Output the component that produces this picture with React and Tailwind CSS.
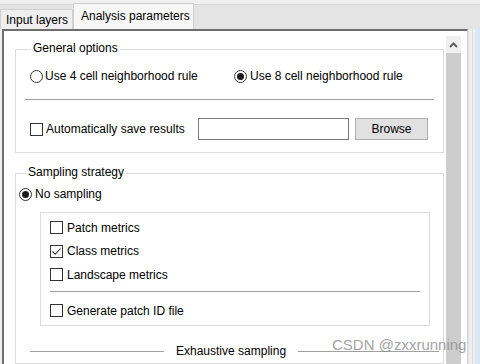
const font = { fontFamily: '"Liberation Sans", Arial, sans-serif' };

function Radio({ checked }) {
  return (
    <span className="w-[13px] h-[13px] rounded-full border border-[#333] bg-white flex items-center justify-center shrink-0">
      {checked && <span className="w-[7px] h-[7px] rounded-full bg-[#1a1a1a]" />}
    </span>
  );
}

function Check({ checked }) {
  return (
    <span className="w-[13px] h-[13px] border border-[#333] bg-white flex items-center justify-center shrink-0">
      {checked && (
        <svg width="11" height="11" viewBox="0 0 11 11">
          <path d="M1.5 5.5 L4.2 8.2 L9.5 2.5" fill="none" stroke="#333" strokeWidth="1.1" />
        </svg>
      )}
    </span>
  );
}

function CheckRow({ label, checked, h = 'h-[23px]' }) {
  return (
    <div className={`flex items-center gap-[4px] ${h}`}>
      <Check checked={checked} />
      <span>{label}</span>
    </div>
  );
}

export default function App() {
  return (
    <div
      className="w-[480px] h-[364px] bg-[#f0f0f0] relative overflow-hidden flex flex-col text-[12px] text-black leading-none"
      style={font}
    >
      {/* tab strip */}
      <div className="h-[5px] border-b border-[#d6d6d6] bg-[#f0f0f0] shrink-0" />
      <div className="h-[24px] bg-[#e4e4e4] flex items-end shrink-0 relative">
        <div className="h-[20px] w-[73px] border border-b-0 border-[#d0d0d0] bg-[#efefef] flex items-center pl-[5px]">
          Input layers
        </div>
        <div className="absolute left-[73px] top-[-2px] h-[26px] w-[121px] border border-b-0 border-[#cfcfcf] bg-[#f7f7f7] flex items-center pl-[7px] pb-[2px]">
          Analysis parameters
        </div>
      </div>

      <div className="flex flex-1 min-h-0">
        {/* pane */}
        <div className="ml-[2px] w-[466px] border-l-2 border-t-2 border-[#6e6e6e] border-r border-r-[#d9d9d9] bg-white flex pt-[5px] pr-[6px]">
          <div className="flex-1 flex flex-col pl-[11px] pr-[2px]">
            <fieldset className="border border-[#dcdcdc] mt-[6px] h-[111px] px-[9px]">
              <legend className="ml-[6px] px-[2px] h-[14px]">General options</legend>
              <div className="flex items-center h-[26px] mt-[7px] pl-[5px]">
                <div className="flex items-center gap-[2px] w-[204px]">
                  <Radio />
                  <span>Use 4 cell neighborhood rule</span>
                </div>
                <div className="flex items-center gap-[3px]">
                  <Radio checked />
                  <span>Use 8 cell neighborhood rule</span>
                </div>
              </div>
              <div className="h-px bg-[#a0a0a0] mt-[10px]" />
              <div className="flex items-center mt-[18px] pl-[5px]">
                <div className="flex items-center gap-[3px] w-[168px]">
                  <Check />
                  <span>Automatically save results</span>
                </div>
                <div className="w-[151px] h-[22px] border border-[#7a7a7a] bg-white" />
                <div className="ml-[6px] w-[73px] h-[22px] border border-[#adadad] bg-[#e1e1e1] flex items-center justify-center">
                  Browse
                </div>
              </div>
            </fieldset>

            <fieldset className="border border-[#dcdcdc] mt-[13px] flex-1 px-[4px]">
              <legend className="ml-[6px] px-[2px] h-[14px]">Sampling strategy</legend>
              <div className="flex items-center gap-[3px] h-[20px] mt-[4px] -ml-[1px]">
                <Radio checked />
                <span>No sampling</span>
              </div>
              <div className="ml-[20px] mr-[9px] mt-[8px] h-[114px] border border-[#dcdcdc] px-[9px] pt-[3px]">
                <CheckRow label="Patch metrics" />
                <CheckRow label="Class metrics" checked h="h-[24px]" />
                <CheckRow label="Landscape metrics" />
                <div className="h-px bg-[#a0a0a0] mt-[5px] mb-[7px]" />
                <CheckRow label="Generate patch ID file" />
              </div>
              <div className="flex items-center mt-[19px] pl-[10px]">
                <div className="w-[134px] h-px bg-[#a0a0a0]" />
                <span className="ml-[12px] mr-[12px]">Exhaustive sampling</span>
                <div className="flex-1 h-px bg-[#a0a0a0]" />
              </div>
            </fieldset>
          </div>

          {/* scrollbar */}
          <div className="w-[15px] flex flex-col shrink-0">
            <div className="h-[17px] bg-[#f0f0f0] flex items-center justify-center">
              <svg width="9" height="6" viewBox="0 0 9 6">
                <path d="M1 5 L4.5 1.5 L8 5" fill="none" stroke="#606060" strokeWidth="2" />
              </svg>
            </div>
            <div className="flex-1 bg-[#cdcdcd]" />
          </div>
        </div>

        <div className="w-[4px] bg-[#f0f0f0] border-l border-[#e0e0e0]" />
        <div className="flex-1 bg-[#f0f0f0] border-l border-[#dcdcdc]">
          <div className="ml-[2px] h-full bg-[#dbe8f4]" />
        </div>
      </div>

      <div className="absolute left-[332px] top-[337px] text-[15px] text-[#8a8a8a]/80">
        CSDN @zxxrunning
      </div>
    </div>
  );
}
